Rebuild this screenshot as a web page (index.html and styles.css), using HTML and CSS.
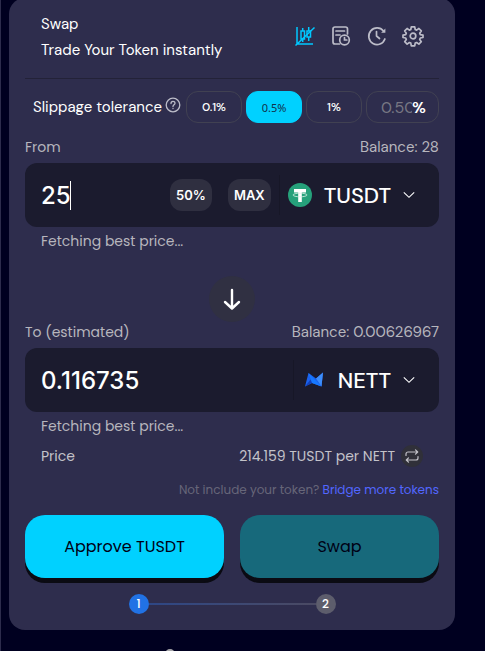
FILE: index.html
```html
<!DOCTYPE html>
<html lang="en">
<head>
<meta charset="utf-8">
<meta name="viewport" content="width=device-width, initial-scale=1">
<title>Swap</title>
<link rel="stylesheet" href="styles.css">
</head>
<body>
<main class="card">
  <header class="head">
    <div class="titles">
      <h1>Swap</h1>
      <p>Trade Your Token instantly</p>
    </div>
    <div class="tools">
      <button class="tool active" aria-label="Toggle chart">
        <svg width="22" height="22" viewBox="0 0 22 22" fill="none" stroke="currentColor" stroke-width="1.5"><path d="M3 2v17h16M1.500 20.500 20.500 2.500"/><path d="M7 6h3.500v8H7zM8.700 3v3M8.700 14v3M13 6h3.500v6H13zM14.700 2v4M14.700 12v4"/></svg>
      </button>
      <button class="tool" aria-label="Orders">
        <svg width="22" height="22" viewBox="0 0 22 22" fill="none" stroke="currentColor" stroke-width="1.700" stroke-linecap="round"><path d="M9.500 19H5a2 2 0 0 1-2-2V4a2 2 0 0 1 2-2h10.500a2 2 0 0 1 2 2v5M6 6h8.500M6 10h4"/><circle cx="14.500" cy="15" r="4.800"/><path d="M14.500 12.500V15h2.300"/></svg>
      </button>
      <button class="tool" aria-label="History">
        <svg width="22" height="22" viewBox="0 0 22 22" fill="none" stroke="currentColor" stroke-width="1.700" stroke-linecap="round" stroke-linejoin="round"><path d="M18.900 14A8.300 8.300 0 1 1 17.500 6"/><path d="M10.500 6.500V11l3 2.500"/><path d="M19.400 3.500v4.300h-4.300z" fill="currentColor" stroke="none"/></svg>
      </button>
      <button class="tool" aria-label="Settings">
        <svg width="22" height="22" viewBox="0 0 22 22" fill="none" stroke="currentColor" stroke-width="1.700" stroke-linejoin="round"><path d="M9.300 1.800h3.400l.5 2.700 1.400.6 2.300-1.600 2.400 2.400-1.600 2.300.6 1.400 2.700.5v2.400l-2.700.5-.6 1.400 1.600 2.300-2.400 2.400-2.300-1.600-1.400.6-.5 2.700H9.300l-.5-2.700-1.400-.6-2.300 1.600-2.400-2.400 1.600-2.300-.6-1.400-2.700-.5v-2.400l2.700-.5.6-1.400-1.600-2.300 2.400-2.400 2.300 1.600 1.400-.6z"/><circle cx="11" cy="11" r="2.800"/></svg>
      </button>
    </div>
  </header>

  <section class="slippage">
    <span class="slip-label">Slippage tolerance</span>
    <button class="help" aria-label="About slippage"><svg width="16" height="16" viewBox="0 0 16 16" fill="none" stroke="currentColor" stroke-width="1.300" stroke-linecap="round"><circle cx="8" cy="8" r="6.800"/><path d="M6 6.500C6 3.700 10 3.700 10 6.300 10 7.800 8 7.800 8 9.500M8 11.500v.1"/></svg></button>
    <div class="choices">
      <button class="choice">0.1%</button>
      <button class="choice selected">0.5%</button>
      <button class="choice">1%</button>
      <label class="custom"><input type="text" placeholder="0.50" aria-label="Custom slippage"><span>%</span></label>
    </div>
  </section>

  <section class="side">
    <div class="line"><label for="from">From</label><span class="balance">Balance: 28</span></div>
    <div class="field">
      <div class="amount"><input id="from" type="text" value="25"><span class="caret"></span></div>
      <button class="quick">50%</button>
      <button class="quick">MAX</button>
      <button class="token">
        <svg class="coin" width="24" height="24" viewBox="0 0 24 24"><circle cx="12" cy="12" r="12" fill="#26a17b"/><path d="M6 6h12v3.400h-4.200V19h-3.600V9.400H6z" fill="#fff"/><ellipse cx="12" cy="12" rx="7" ry="1.800" fill="none" stroke="#d9f1e8" stroke-width=".8"/></svg>
        <span>TUSDT</span>
        <svg class="chevron" width="12" height="8" viewBox="0 0 12 8" fill="none" stroke="currentColor" stroke-width="1.100"><path d="m.8 1.300 5.200 5 5.200-5"/></svg>
      </button>
    </div>
    <p class="note">Fetching best price...</p>
  </section>

  <button class="flip" aria-label="Switch direction"><svg width="20" height="24" viewBox="0 0 20 24" fill="none" stroke="currentColor" stroke-width="2.400" stroke-linecap="round" stroke-linejoin="round"><path d="M10 3v18M3 15l7 6.500 7-6.500"/></svg></button>

  <section class="side">
    <div class="line"><label for="to">To (estimated)</label><span class="balance">Balance: 0.00626967</span></div>
    <div class="field">
      <div class="amount"><input id="to" type="text" value="0.116735"></div>
      <button class="token">
        <svg class="coin" width="24" height="24" viewBox="0 0 24 24"><path d="M6.500 5 14 10.500 21 4.500 19.500 18.500 10 15 3 18.500z" fill="#1b62ee"/><path d="M6.500 5 19.500 18.500 10 15z" fill="#1678ff"/><path d="M14 10.500 21 4.500 19.500 18.500z" fill="#3d8dfa"/><path d="M3 18.500 8.500 11.500 10 15z" fill="#1240b8"/></svg>
        <span>NETT</span>
        <svg class="chevron" width="12" height="8" viewBox="0 0 12 8" fill="none" stroke="currentColor" stroke-width="1.100"><path d="m.8 1.300 5.200 5 5.200-5"/></svg>
      </button>
    </div>
    <p class="note">Fetching best price...</p>
  </section>

  <div class="price">
    <span>Price</span>
    <span class="rate">214.159 TUSDT per NETT
      <button class="invert" aria-label="Invert price"><svg width="14" height="14" viewBox="0 0 14 14" fill="none" stroke="currentColor" stroke-width="1.200" stroke-linecap="round" stroke-linejoin="round"><path d="M1 6.500V5a2 2 0 0 1 2-2h9.500M10.500.8 12.700 3l-2.200 2.200M13 7.500V9a2 2 0 0 1-2 2H1.500M3.500 8.800 1.300 11l2.200 2.200"/></svg></button>
    </span>
  </div>

  <p class="bridge">Not include your token? <a href="#bridge">Bridge more tokens</a></p>

  <div class="actions">
    <button class="action">Approve TUSDT</button>
    <button class="action" disabled>Swap</button>
  </div>

  <div class="steps"><span class="step current">1</span><span class="track"></span><span class="step">2</span></div>
</main>
<footer class="foot"><svg width="10" height="10" viewBox="0 0 10 10" fill="none" stroke="#a5a5a9" stroke-width="2"><circle cx="5" cy="5" r="4"/></svg></footer>
</body>
</html>
```

FILE: styles.css
```css
* {
  box-sizing: border-box;
}

html {
  overflow: hidden;
}

body {
  margin: 0;
  height: 100vh;
  overflow: hidden;
  padding: 0 30px 0 8px;
  border-left: 1px solid #2d2c4c;
  background: #000020;
  color: #fff;
  font-family: "Poppins", "Inter", sans-serif;
  font-size: 14px;
}

button,
input {
  margin: 0;
  padding: 0;
  border: 0;
  background: none;
  color: inherit;
  font: inherit;
}

h1,
p {
  margin: 0;
}

svg {
  display: block;
  flex: none;
}

.card {
  margin-top: -2px;
  padding: 13px 16px 16px;
  border-radius: 16px;
  background: #2e2d4d;
}

.head {
  display: flex;
  justify-content: space-between;
  padding: 0 16px 15px;
  border-bottom: 1px solid #232238;
}

.titles h1,
.titles p,
.slip-label {
  font-family: "DM Sans", "Inter", sans-serif;
  font-size: 15px;
  font-weight: 450;
  line-height: 26px;
}

.tools {
  display: flex;
  gap: 14px;
  height: 50px;
  align-items: center;
  margin-right: -1px;
}

.tool {
  color: #bcbcc8;
}

.tool.active {
  color: #00c8ff;
}

.slippage {
  display: flex;
  align-items: center;
  margin-top: 12px;
  padding-left: 8px;
}

.slip-label {
  white-space: nowrap;
}

.help {
  margin: 0 4px 4px 3px;
  color: #bcbcc8;
}

.choices {
  display: flex;
  flex: 1;
  gap: 4px;
  justify-content: flex-end;
}

.choice,
.custom {
  width: 56px;
  height: 32px;
  border: 1px solid #414152;
  border-radius: 12px;
  font-family: "DM Sans", "Inter", sans-serif;
  font-size: 12px;
  font-weight: 500;
}

.choice.selected {
  border-color: #00d1ff;
  background: #00d1ff;
  color: #11324c;
  font-family: "Noto Sans", sans-serif;
  font-size: 11px;
  font-weight: 400;
}

.custom {
  display: flex;
  align-items: center;
  width: 73px;
  padding: 0 12px 0 14px;
  font-size: 16px;
  font-weight: 600;
}

.custom input {
  flex: 1;
  min-width: 0;
  font-weight: 400;
}

.custom input::placeholder {
  color: #777783;
  opacity: 1;
}

.line {
  display: flex;
  justify-content: space-between;
  margin-top: 12px;
  color: #b7b6bd;
  line-height: 24px;
}

.balance {
  font-family: "DM Sans", "Inter", sans-serif;
  font-size: 15px;
}

.field {
  display: flex;
  align-items: center;
  height: 64px;
  margin-top: 4px;
  padding: 0 24px 0 16px;
  border-radius: 12px;
  background: #1b1b2e;
}

.amount {
  position: relative;
  flex: 1;
  min-width: 0;
}

.amount input {
  width: 100%;
  font-family: "Inter", sans-serif;
  font-size: 24px;
  font-weight: 500;
}

.caret {
  position: absolute;
  left: 29px;
  top: 0;
  width: 1px;
  height: 100%;
  background: #fff;
}

.quick {
  height: 32px;
  margin-right: 16px;
  padding: 0 6px;
  border-radius: 12px;
  background: #2f2f40;
  font-family: "Inter", sans-serif;
  font-size: 13px;
  font-weight: 600;
}

.quick + .token {
  margin-left: -8px;
}

.token {
  display: flex;
  align-items: center;
  height: 40px;
  padding-left: 8px;
  border-left: 1px solid #171727;
  font-family: "DM Sans", "Inter", sans-serif;
  font-size: 22px;
  font-weight: 500;
}

.token span {
  margin-left: 12px;
}

.chevron {
  margin-left: 12px;
}

.note {
  padding: 2px 16px 0;
  color: #b7b6bd;
  line-height: 24px;
}

.flip {
  display: flex;
  align-items: center;
  justify-content: center;
  width: 46px;
  height: 46px;
  margin: 23px auto -14px;
  border-radius: 50%;
  background: #303042;
}

.price {
  display: flex;
  align-items: center;
  justify-content: space-between;
  margin-top: 6px;
  padding: 0 16px;
  color: #c3c2c9;
  line-height: 24px;
}

.rate {
  display: flex;
  align-items: center;
  gap: 6px;
}

.invert {
  display: flex;
  align-items: center;
  justify-content: center;
  width: 22px;
  height: 22px;
  border-radius: 50%;
  background: #303039;
}

.bridge {
  margin-top: 12px;
  color: #676679;
  font-size: 12px;
  line-height: 20px;
  text-align: right;
}

.bridge a {
  color: #5267ff;
  text-decoration: none;
}

.actions {
  display: grid;
  grid-template-columns: 1fr 1fr;
  gap: 16px;
  margin-top: 15px;
}

.action {
  height: 63px;
  border-radius: 20px;
  background: #00d1ff;
  box-shadow: 0 5px 0 -1px #0b0b13, 0 5px #0b0b13;
  color: #000014;
  font-size: 16px;
  font-weight: 400;
}

.action:disabled {
  background: #17697b;
}

.steps {
  display: flex;
  align-items: center;
  width: 50%;
  margin: 16px auto 0;
}

.step {
  width: 20px;
  height: 20px;
  border-radius: 50%;
  background: #5d5d6c;
  font-size: 12px;
  font-weight: 500;
  line-height: 20px;
  text-align: center;
}

.step.current {
  background: #2172e5;
}

.track {
  flex: 1;
  height: 2px;
  background: linear-gradient(90deg, #2e4786, #4b4a63);
}

.foot {
  padding: 19px 0 0 156px;
}
```
